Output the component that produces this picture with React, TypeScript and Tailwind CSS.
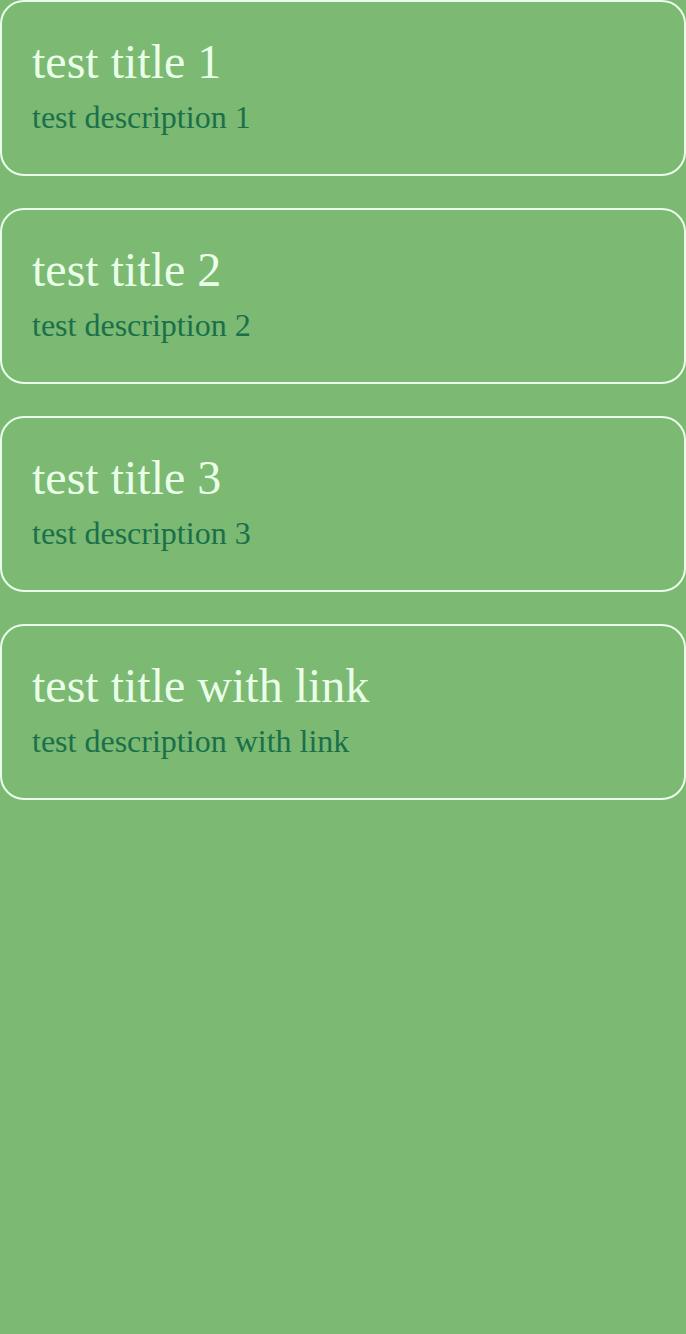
const items = [
  { title: 'test title 1', description: 'test description 1' },
  { title: 'test title 2', description: 'test description 2' },
  { title: 'test title 3', description: 'test description 3' },
  { title: 'test title with link', description: 'test description with link' }
]

export default function App() {
  return (
    <div className="min-h-[1334px] w-full bg-[#7cb972] font-['Liberation_Serif',serif]">
      <div className="flex flex-col gap-[32px]">
        {items.map((item) => (
          <div
            key={item.title}
            className="flex h-[176px] flex-col gap-[10px] rounded-[24px] border-2 border-[#eaffe8] px-[30px] pt-[32px]"
          >
            <div className="text-[48px] leading-[55px] text-[#eaffe8]">{item.title}</div>
            <div className="text-[32px] leading-[37px] text-[#19704a]">{item.description}</div>
          </div>
        ))}
      </div>
    </div>
  )
}
